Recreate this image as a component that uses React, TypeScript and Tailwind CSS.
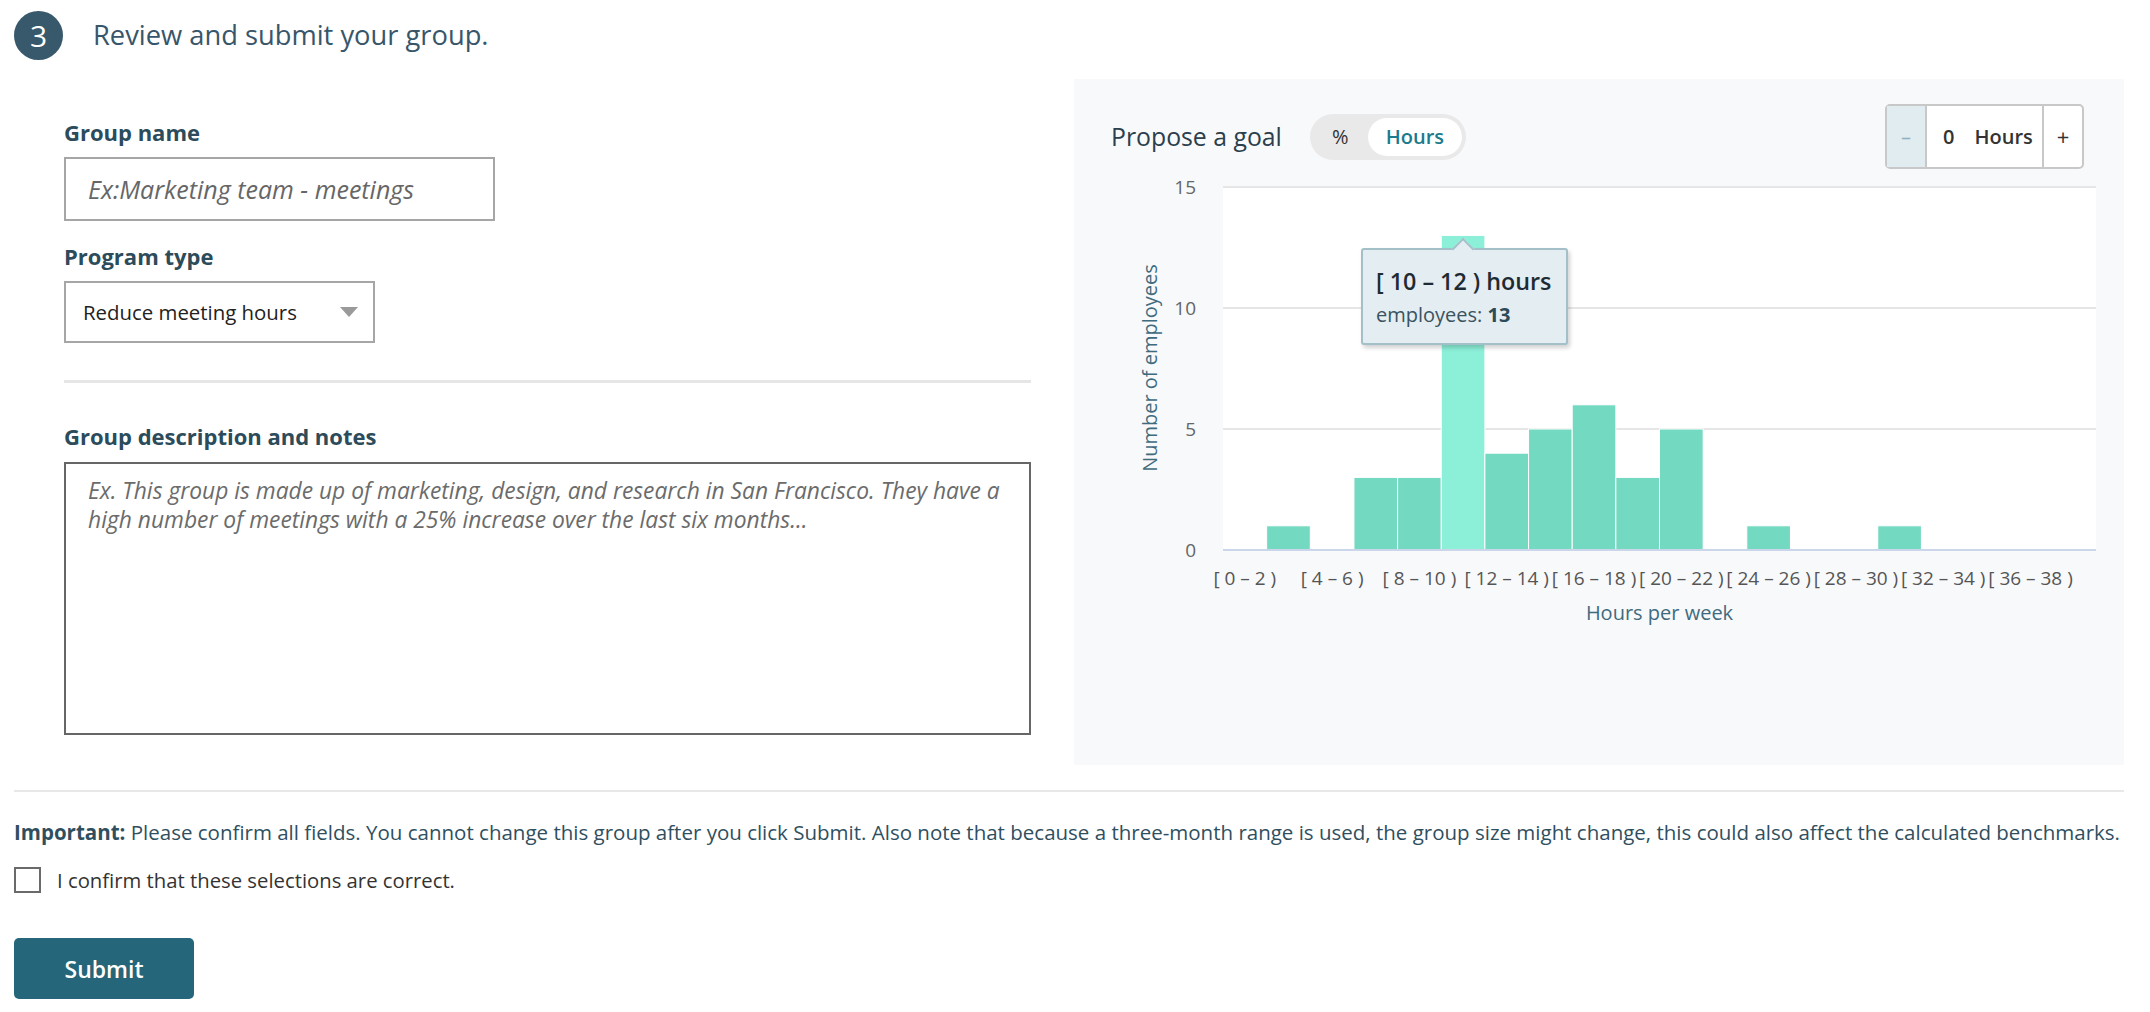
import React from "react";

const counts = [0, 1, 0, 3, 3, 13, 4, 5, 6, 3, 5, 0, 1, 0, 0, 1, 0, 0, 0, 0];

const Histogram = () => {
  const left = 149;
  const top = 17;
  const base = 380;
  const plotW = 873;
  const bw = plotW / counts.length;
  const unit = (base - top) / 15;

  return (
    <svg width={1050} height={470} className="block">
      <rect x={left} y={top} width={plotW} height={base - top} fill="#ffffff" />
      {[15, 10, 5].map((v) => (
        <line
          key={v}
          x1={left}
          x2={left + plotW}
          y1={base - v * unit}
          y2={base - v * unit}
          stroke="#e6e6e6"
          strokeWidth={2}
        />
      ))}
      {[0, 5, 10, 15].map((v) => (
        <text key={v} x={122} y={base - v * unit + 7} textAnchor="end" fontSize={19} fill="#666666">
          {v}
        </text>
      ))}
      {counts.map((c, i) =>
        c > 0 ? (
          <rect
            key={i}
            x={left + i * bw}
            y={base - c * unit}
            width={bw}
            height={c * unit}
            fill={i === 5 ? "#8cf0d8" : "#74d9c1"}
            stroke="#ffffff"
            strokeWidth={1}
          />
        ) : null
      )}
      <line x1={left} x2={left + plotW} y1={base} y2={base} stroke="#ccd6eb" strokeWidth={2} />
      {counts.map((_, i) =>
        i % 2 === 0 ? (
          <text key={i} x={left + (i + 0.5) * bw} y={415} textAnchor="middle" fontSize={19} fill="#555555">
            {`[ ${i * 2} – ${i * 2 + 2} )`}
          </text>
        ) : null
      )}
      <text transform="translate(83,198) rotate(-90)" textAnchor="middle" fontSize={20} fill="#3f6b7e">
        Number of employees
      </text>
      <text x={left + plotW / 2} y={450} textAnchor="middle" fontSize={20} fill="#3f6b7e">
        Hours per week
      </text>
    </svg>
  );
};

export default function App() {
  return (
    <div className="w-[2150px] h-[1012px] bg-white font-['Open_Sans',sans-serif] text-[#2c4b5b] overflow-hidden">
      <div className="flex items-center pt-[11px] pl-[14px]">
        <div className="w-[49px] h-[49px] rounded-full bg-[#38586b] text-white flex items-center justify-center text-[30px]">
          3
        </div>
        <h1 className="ml-[30px] text-[27.3px] text-[#38566a]">Review and submit your group.</h1>
      </div>

      <div className="flex mt-[19px] pl-[14px]">
        <div className="w-[967px] ml-[50px] flex flex-col">
          <label className="mt-[39px] text-[22px] leading-[28px] font-bold text-[#2c4b5b]">Group name</label>
          <input
            placeholder="Ex:Marketing team - meetings"
            className="mt-[11px] w-[431px] h-[64px] border-2 border-[#a6a6a6] px-[22px] text-[25px] italic placeholder:text-[#666666] outline-none"
          />
          <label className="mt-[21px] text-[22px] leading-[28px] font-bold text-[#2c4b5b]">Program type</label>
          <div className="mt-[11px] w-[311px] h-[62px] border-2 border-[#a6a6a6] flex items-center pl-[17px] pr-[15px]">
            <span className="text-[20.4px] text-[#222222]">Reduce meeting hours</span>
            <span className="ml-auto w-0 h-0 border-l-[9px] border-r-[9px] border-t-[10px] border-l-transparent border-r-transparent border-t-[#9a9a9a]" />
          </div>
          <div className="mt-[37px] h-[3px] bg-[#e6e6e6]" />
          <label className="mt-[39px] text-[22px] leading-[28px] font-bold text-[#2c4b5b]">
            Group description and notes
          </label>
          <textarea
            className="mt-[12px] h-[273px] border-2 border-[#666666] pl-[22px] pr-[8px] pt-[12px] resize-none text-[22.8px] leading-[29px] italic placeholder:text-[#6b6b6b] outline-none"
            placeholder={
              "Ex. This group is made up of marketing, design, and research in San Francisco. They have a\nhigh number of meetings with a 25% increase over the last six months..."
            }
          />
        </div>

        <div className="ml-[43px] w-[1050px] h-[686px] bg-[#f8f9fb] flex flex-col">
          <div className="flex items-center h-[65px] mt-[25px] pl-[37px] pr-[40px]">
            <span className="text-[24.8px] font-medium text-[#2b3f4d]">Propose a goal</span>
            <div className="ml-[28px] w-[156px] h-[46px] rounded-full bg-[#e9e9e9] flex items-center p-[4px]">
              <span className="ml-[18px] text-[20px] text-[#333333]">%</span>
              <span className="ml-auto w-[94px] h-[38px] rounded-full bg-white flex items-center justify-center text-[20px] font-semibold text-[#1b7b8c]">
                Hours
              </span>
            </div>
            <div className="ml-auto w-[199px] h-[65px] border-2 border-[#c8c8c8] rounded-[5px] flex bg-white">
              <div className="w-[40px] bg-[#e1ecf1] border-r-2 border-[#c8c8c8] flex items-center justify-center text-[20px] text-[#8fb0bf]">
                –
              </div>
              <div className="flex-1 flex items-center pl-[16px] text-[20px] font-semibold text-[#333333]">
                <span>0</span>
                <span className="ml-[20px]">Hours</span>
              </div>
              <div className="w-[40px] border-l-2 border-[#c8c8c8] flex items-center justify-center text-[22px] text-[#333333]">
                +
              </div>
            </div>
          </div>

          <div className="relative mt-[1px]">
            <Histogram />
            <div className="absolute left-[287px] top-[78px] w-[207px] h-[97px] bg-[#e3edf2] border-2 border-[#a3c0c9] rounded-[3px] shadow-[2px_3px_4px_rgba(0,0,0,0.18)] pl-[13px] pt-[16px]">
              <span className="absolute -top-[9px] left-[92px] w-[16px] h-[16px] rotate-45 bg-[#e3edf2] border-t-2 border-l-2 border-[#a3c0c9]" />
              <div className="relative text-[23.3px] leading-[30px] font-semibold text-[#1e2b33]">[ 10 – 12 ) hours</div>
              <div className="relative mt-[6px] text-[20px] leading-[26px] text-[#3b5260]">
                employees: <span className="font-bold text-[#2d4a58]">13</span>
              </div>
            </div>
          </div>
        </div>
      </div>

      <div className="ml-[14px] w-[2110px] mt-[25px] h-[2px] bg-[#e8e8e8]" />
      <p className="ml-[14px] mt-[26px] text-[20.5px] leading-[28px] text-[#2f4f5f] whitespace-nowrap">
        <span className="font-bold">Important:</span> Please confirm all fields. You cannot change this group after you
        click Submit. Also note that because a three-month range is used, the group size might change, this could also
        affect the calculated benchmarks.
      </p>
      <label className="ml-[14px] mt-[19px] flex items-center">
        <span className="w-[27px] h-[26px] border-2 border-[#6a6a6a] bg-white" />
        <span className="ml-[16px] text-[20.3px] text-[#333333]">I confirm that these selections are correct.</span>
      </label>
      <button className="ml-[14px] mt-[43px] w-[180px] h-[61px] bg-[#25667a] rounded-[5px] text-white text-[23px] font-semibold">
        Submit
      </button>
    </div>
  );
}
